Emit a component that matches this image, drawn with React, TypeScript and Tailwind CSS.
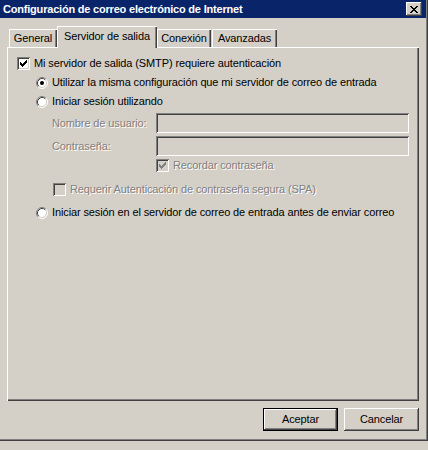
import React from "react";

const raised =
  "shadow-[inset_-1px_-1px_0_0_#404040,inset_1px_1px_0_0_#ffffff,inset_-2px_-2px_0_0_#808080,inset_2px_2px_0_0_#d4d0c8]";
const sunken =
  "shadow-[inset_1px_1px_0_0_#808080,inset_-1px_-1px_0_0_#ffffff,inset_2px_2px_0_0_#404040,inset_-2px_-2px_0_0_#d4d0c8]";
const etched = "text-[#808080] [text-shadow:1px_1px_0_#ffffff]";

const CHECK =
  "M6 0h1v1h-1z M5 1h2v1h-2z M0 2h1v1h-1z M4 2h3v1h-3z M0 3h2v1h-2z M3 3h3v1h-3z M0 4h5v1h-5z M1 5h3v1h-3z M2 6h1v1h-1z";

function Check({ checked, disabled }: { checked?: boolean; disabled?: boolean }) {
  return (
    <span
      className={`flex h-[13px] w-[13px] shrink-0 items-center justify-center ${sunken} ${
        disabled ? "bg-[#d4d0c8]" : "bg-white"
      }`}
    >
      {checked && (
        <svg width="7" height="7" viewBox="0 0 7 7" shapeRendering="crispEdges">
          <path d={CHECK} fill={disabled ? "#808080" : "#000000"} />
        </svg>
      )}
    </span>
  );
}

function Radio({ checked }: { checked?: boolean }) {
  return (
    <svg width="12" height="12" viewBox="0 0 12 12" className="shrink-0">
      <circle cx="6" cy="6" r="5" fill="#ffffff" />
      <path d="M2.11 9.89 A5.5 5.5 0 0 1 9.89 2.11" stroke="#808080" fill="none" />
      <path d="M9.89 2.11 A5.5 5.5 0 0 1 2.11 9.89" stroke="#ffffff" fill="none" />
      <path d="M2.82 9.18 A4.5 4.5 0 0 1 9.18 2.82" stroke="#404040" fill="none" />
      <path d="M9.18 2.82 A4.5 4.5 0 0 1 2.82 9.18" stroke="#d4d0c8" fill="none" />
      {checked && <circle cx="6" cy="6" r="2" fill="#000000" />}
    </svg>
  );
}

function Tab({ label, width, active }: { label: string; width: string; active?: boolean }) {
  return (
    <div
      className={`flex items-center justify-center bg-[#d4d0c8] shadow-[inset_1px_1px_0_0_#ffffff,inset_-1px_0_0_0_#404040,inset_-2px_0_0_0_#808080] ${width} ${
        active ? "relative z-10 mb-[-1px] h-[22px] pb-[2px]" : "h-[18px]"
      }`}
    >
      {label}
    </div>
  );
}

function Button({ label, isDefault }: { label: string; isDefault?: boolean }) {
  return (
    <button
      type="button"
      className={`flex h-[23px] w-[75px] items-center justify-center bg-[#d4d0c8] ${
        isDefault
          ? "border border-black shadow-[inset_-1px_-1px_0_0_#404040,inset_1px_1px_0_0_#ffffff,inset_-2px_-2px_0_0_#808080]"
          : raised
      }`}
    >
      {label}
    </button>
  );
}

export default function App() {
  return (
    <div className="h-[450px] w-[428px] overflow-hidden bg-[#d4d0c8] font-['Liberation_Sans',Arial,sans-serif] text-[11px] leading-none tracking-[-0.12px] text-black">
      <div className="flex h-[441px] flex-col shadow-[inset_-1px_-1px_0_0_#404040,inset_-2px_-2px_0_0_#808080]">
        <div className="mr-[2px] flex h-[18px] items-center justify-between bg-[#0a246a] pl-[3px] pr-[4px]">
          <span className="text-[11px] font-bold tracking-[-0.2px] text-white">
            Configuración de correo electrónico de Internet
          </span>
          <span className={`flex h-[14px] w-[16px] items-center justify-center bg-[#d4d0c8] ${raised}`}>
            <svg width="8" height="7" viewBox="0 0 8 7" shapeRendering="crispEdges">
              <path
                d="M0 0h2v1h-2z M6 0h2v1h-2z M1 1h2v1h-2z M5 1h2v1h-2z M2 2h4v1h-4z M3 3h2v1h-2z M2 4h4v1h-4z M1 5h2v1h-2z M5 5h2v1h-2z M0 6h2v1h-2z M6 6h2v1h-2z"
                fill="#000000"
              />
            </svg>
          </span>
        </div>

        <div className="mt-[8px] flex h-[21px] items-end pl-[9px]">
          <Tab label="General" width="w-[48px]" />
          <Tab label="Servidor de salida" width="w-[100px]" active />
          <Tab label="Conexión" width="w-[54px]" />
          <div className="w-[1px]" />
          <Tab label="Avanzadas" width="w-[65px]" />
        </div>

        <div className="ml-[7px] h-[354px] w-[412px] pl-[10px] pt-[10px] shadow-[inset_1px_1px_0_0_#ffffff,inset_-1px_-1px_0_0_#404040,inset_-2px_-2px_0_0_#808080]">
          <div className="flex h-[13px] items-center">
            <Check checked />
            <span className="ml-[4px]">Mi servidor de salida (SMTP) requiere autenticación</span>
          </div>

          <div className="mt-[6px] flex h-[13px] items-center pl-[19px]">
            <Radio checked />
            <span className="ml-[4px]">Utilizar la misma configuración que mi servidor de correo de entrada</span>
          </div>

          <div className="mt-[6px] flex h-[13px] items-center pl-[19px]">
            <Radio />
            <span className="ml-[4px]">Iniciar sesión utilizando</span>
          </div>

          <div className="mt-[5px] flex items-center pl-[35px]">
            <span className={`w-[104px] ${etched}`}>Nombre de usuario:</span>
            <div className={`h-[20px] w-[253px] bg-[#d4d0c8] ${sunken}`} />
          </div>

          <div className="mt-[3px] flex items-center pl-[35px]">
            <span className={`w-[104px] ${etched}`}>Contraseña:</span>
            <div className={`h-[20px] w-[253px] bg-[#d4d0c8] ${sunken}`} />
          </div>

          <div className="mt-[3px] flex h-[13px] items-center pl-[139px]">
            <Check checked disabled />
            <span className={`ml-[4px] ${etched}`}>Recordar contraseña</span>
          </div>

          <div className="mt-[11px] flex h-[13px] items-center pl-[36px]">
            <Check disabled />
            <span className={`ml-[4px] ${etched}`}>Requerir Autenticación de contraseña segura (SPA)</span>
          </div>

          <div className="mt-[10px] flex h-[13px] items-center pl-[19px]">
            <Radio />
            <span className="ml-[4px]">Iniciar sesión en el servidor de correo de entrada antes de enviar correo</span>
          </div>
        </div>

        <div className="mt-[7px] flex justify-end gap-[6px] pr-[9px]">
          <Button label="Aceptar" isDefault />
          <Button label="Cancelar" />
        </div>
      </div>
    </div>
  );
}
